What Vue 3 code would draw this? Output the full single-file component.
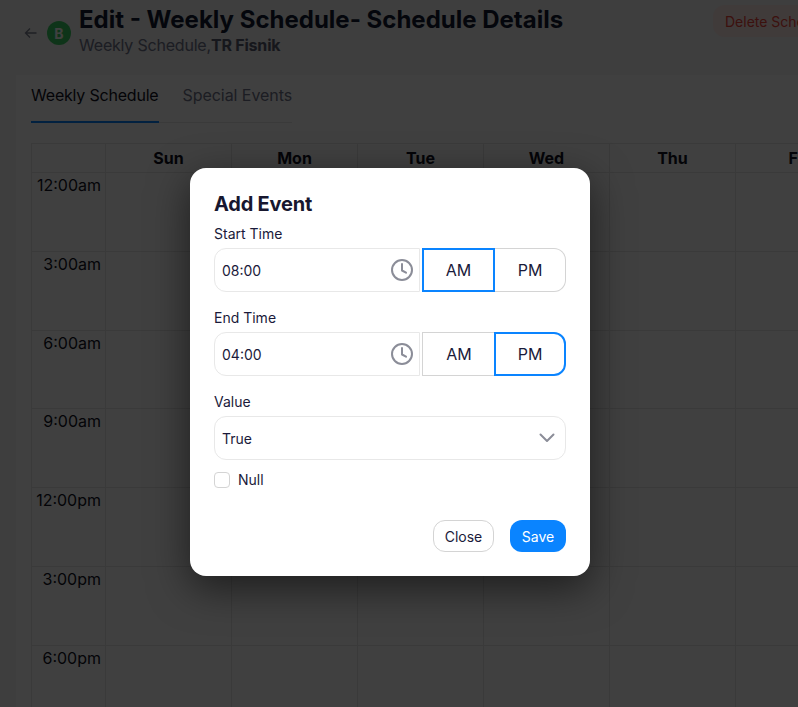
<script setup>
const days = ['Sun', 'Mon', 'Tue', 'Wed', 'Thu', 'Fri', 'Sat']
const times = ['12:00am', '3:00am', '6:00am', '9:00am', '12:00pm', '3:00pm', '6:00pm']
const pickers = [
  { label: 'Start Time', value: '08:00', active: 'AM' },
  { label: 'End Time', value: '04:00', active: 'PM' }
]
</script>

<template>
  <div class="page">
    <header class="top">
      <svg class="back" width="14" height="14" viewBox="0 0 14 14" fill="none" stroke="currentColor" stroke-width="1.3"><path d="M12.5 7H1.5M6 2.5 1.5 7 6 11.5" /></svg>
      <span class="avatar">B</span>
      <div class="titles">
        <h1>Edit - Weekly Schedule- Schedule Details</h1>
        <p>Weekly Schedule,<b>TR Fisnik</b></p>
      </div>
      <button class="delete">Delete Schedule</button>
    </header>

    <section class="card">
      <nav class="tabs">
        <span class="tab on">Weekly Schedule</span>
        <span class="tab">Special Events</span>
      </nav>
      <div class="table">
        <div class="hrow">
          <div class="tcell"></div>
          <div v-for="d in days" :key="d" class="dcell head">{{ d }}</div>
        </div>
        <div v-for="t in times" :key="t" class="row">
          <div class="tcell time">{{ t }}</div>
          <div v-for="d in days" :key="d" class="dcell"></div>
        </div>
      </div>
    </section>

    <div class="backdrop"></div>

    <div class="modal">
      <h2>Add Event</h2>
      <div v-for="p in pickers" :key="p.label" class="field">
        <label>{{ p.label }}</label>
        <div class="picker">
          <div class="timebox">
            <span>{{ p.value }}</span>
            <svg width="24" height="24" viewBox="0 0 24 24" fill="none" stroke="#8b8d98" stroke-width="2" stroke-linecap="round" stroke-linejoin="round"><circle cx="12" cy="12" r="10" /><path d="M12 6v6.5l4 2.2" /></svg>
          </div>
          <div class="seg am" :class="{ on: p.active === 'AM' }">AM</div>
          <div class="seg pm" :class="{ on: p.active === 'PM' }">PM</div>
        </div>
      </div>
      <div class="field">
        <label>Value</label>
        <div class="select">
          <span>True</span>
          <svg width="16" height="10" viewBox="0 0 16 10" fill="none" stroke="#8b8d98" stroke-width="2" stroke-linecap="round" stroke-linejoin="round"><path d="M1.5 1.5 8 8l6.5-6.5" /></svg>
        </div>
      </div>
      <div class="check">
        <span class="box"></span>
        <span>Null</span>
      </div>
      <div class="actions">
        <button class="close">Close</button>
        <button class="save">Save</button>
      </div>
    </div>
  </div>
</template>

<style>
html, body { margin: 0; overflow: hidden; }
</style>

<style scoped>
.page {
  position: relative;
  width: 798px;
  height: 707px;
  overflow: hidden;
  background: #f5f5f5;
  font-family: Inter, "Noto Sans", sans-serif;
  color: #101223;
}
.top {
  height: 75px;
  box-sizing: border-box;
  display: flex;
  align-items: flex-start;
  padding: 6px 0 0 24px;
  white-space: nowrap;
}
.back { margin: 20px 9px 0 0; color: #7a7e90; flex: none; }
.avatar {
  width: 24px;
  height: 24px;
  margin: 15px 8px 0 0;
  border-radius: 50%;
  background: #3ad063;
  color: #fff;
  font-size: 14px;
  font-weight: 700;
  display: flex;
  align-items: center;
  justify-content: center;
  flex: none;
}
.titles { width: 634px; flex: none; }
h1 { margin: 0; font-size: 24px; line-height: 28px; font-weight: 700; color: #111a33; }
.titles p { margin: 1px 0 0; font-size: 16px; line-height: 20px; letter-spacing: -0.2px; color: #70748a; }
.titles b { font-weight: 700; color: #5a5e72; }
.delete {
  flex: none;
  margin-top: -1px;
  height: 32px;
  padding: 0 12px;
  border: 0;
  border-radius: 12px;
  background: #ffe9e7;
  color: #f04438;
  font: 14px Inter, sans-serif;
}
.card {
  margin-left: 16px;
  height: 632px;
  background: #fff;
  padding: 0 0 0 15px;
}
.tabs {
  display: inline-flex;
  gap: 24px;
  height: 48px;
  box-sizing: border-box;
  border-bottom: 1px solid #e8e8e8;
}
.tab { font-size: 16px; line-height: 41px; letter-spacing: -0.05px; color: #70748a; margin-bottom: -1px; }
.tab.on { color: #101223; letter-spacing: -0.2px; border-bottom: 2px solid #0a84ff; }
.table {
  margin-top: 20px;
  width: 1000px;
  border: solid #e5e5e5;
  border-width: 1px 0 0 1px;
}
.hrow, .row { display: flex; border-bottom: 1px solid #e5e5e5; box-sizing: border-box; }
.hrow { height: 29px; }
.row { height: 78.8px; }
.tcell { width: 74px; box-sizing: border-box; border-right: 1px solid #e5e5e5; flex: none; }
.dcell { width: 126px; box-sizing: border-box; border-right: 1px solid #e5e5e5; flex: none; }
.head { text-align: center; font-weight: 700; font-size: 16px; line-height: 29px; }
.time { text-align: right; padding: 2px 4px 0 0; font-size: 16px; line-height: 20px; }
.backdrop { position: absolute; inset: 0; background: rgba(0, 0, 0, 0.75); }
.modal {
  position: absolute;
  left: 190px;
  top: 168px;
  width: 400px;
  height: 408px;
  box-sizing: border-box;
  padding: 24px;
  background: #fff;
  border-radius: 16px;
  box-shadow: 0 12px 40px rgba(0, 0, 0, 0.55);
  color: #1a1a3a;
  display: flex;
  flex-direction: column;
}
h2 { margin: 0 0 4px; font-size: 20px; line-height: 24px; font-weight: 700; letter-spacing: -0.2px; color: #17172f; }
.field { margin-top: 4px; margin-bottom: 12px; }
.field label { display: block; font-size: 14px; line-height: 20px; margin-bottom: 4px; }
.picker { display: flex; height: 44px; font-size: 14px; }
.timebox {
  width: 206px;
  box-sizing: border-box;
  border: 1px solid #e8e8e8;
  border-radius: 12px 0 0 12px;
  padding: 0 5px 0 7px;
  display: flex;
  align-items: center;
  justify-content: space-between;
  margin-right: 2px;
}
.seg {
  box-sizing: border-box;
  border: 1px solid #d4d4d4;
  display: flex;
  align-items: center;
  justify-content: center;
  font-size: 16px;
}
.am { width: 73px; border-right-width: 0; }
.pm { flex: 1; border-left-width: 0; border-radius: 0 12px 12px 0; }
.seg.on { border: 2px solid #0a84ff; }
.pm.on { margin-left: -1px; }
.select {
  height: 44px;
  box-sizing: border-box;
  border: 1px solid #e8e8e8;
  border-radius: 12px;
  padding: 0 10px 0 7px;
  display: flex;
  align-items: center;
  justify-content: space-between;
  font-size: 14px;
}
.check { display: flex; align-items: center; gap: 8px; font-size: 14px; line-height: 20px; margin-top: -2px; }
.box { width: 16px; height: 16px; box-sizing: border-box; border: 1px solid #d4d4d4; border-radius: 4px; }
.actions { margin-top: auto; display: flex; justify-content: flex-end; gap: 16px; }
.actions button {
  height: 32px;
  box-sizing: border-box;
  border-radius: 12px;
  font: 14px Inter, sans-serif;
  padding: 0;
}
.close { width: 61px; background: #fff; border: 1px solid #d4d4d4; color: #1a1a3a; }
.save { width: 56px; background: #0a84ff; border: 0; color: #fff; }
</style>
